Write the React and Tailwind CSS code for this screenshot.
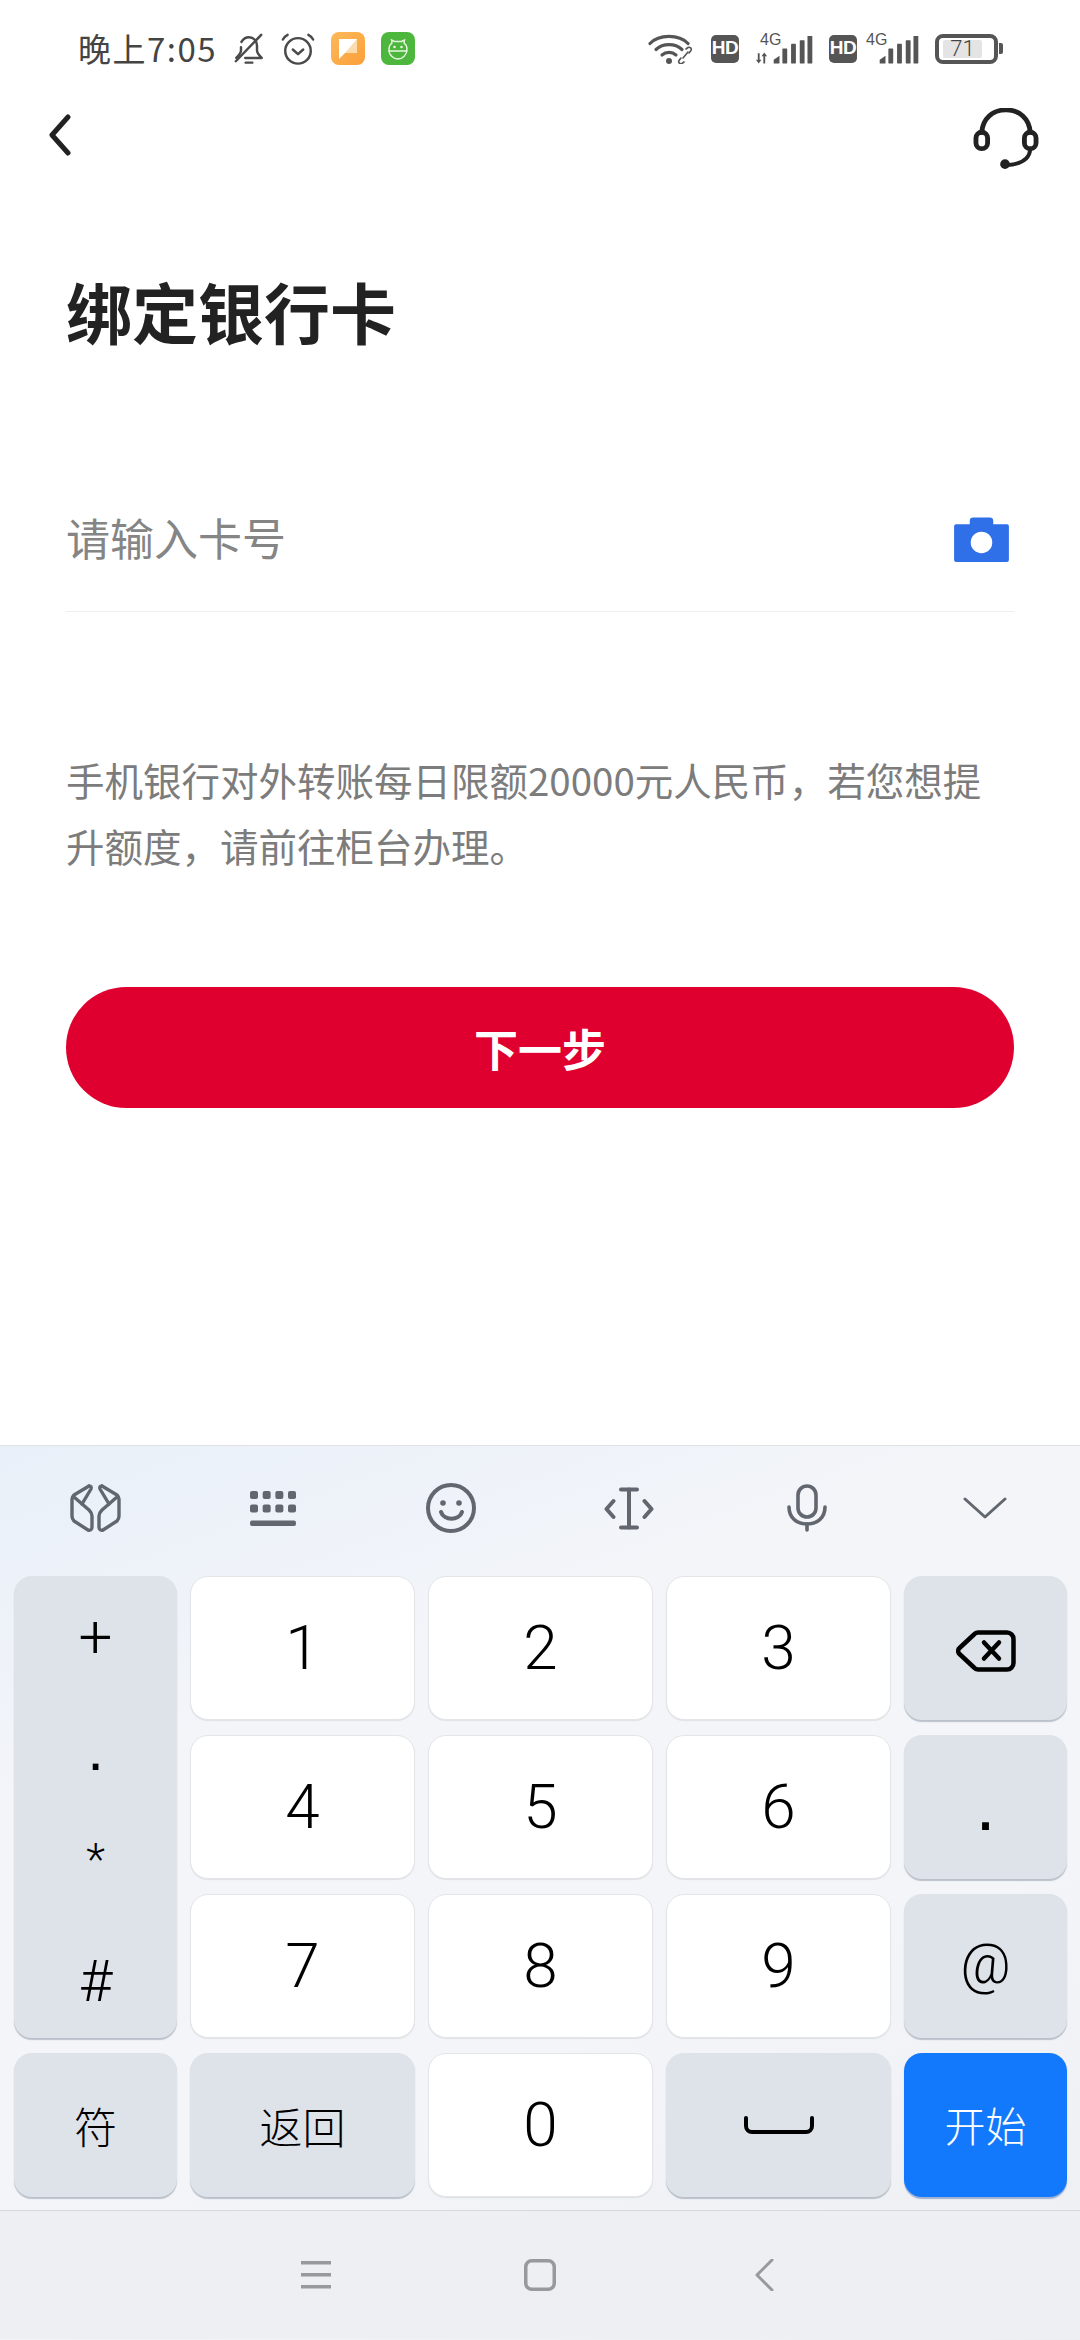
import React from 'react';

const cjk = '[font-family:"Noto_Sans_CJK_SC","Noto_Sans",sans-serif]';

const Bell = () => (
  <svg width="32" height="32" viewBox="0 0 32 34" fill="none" stroke="#4a4a4a" strokeWidth="2.6" strokeLinecap="round" strokeLinejoin="round">
    <path d="M8 9.500C10 6 12.500 4.500 16 4.500c5 0 8.500 4 8.500 9v5c0 3 2 5 5 8H12" />
    <path d="M7.500 15v3.500c0 3-2 5-5 8" />
    <path d="M2 30L29 2" />
    <path d="M12.500 31.500h7" />
  </svg>
);

const Alarm = () => (
  <svg width="36" height="34" viewBox="0 0 36 36" fill="none" stroke="#4a4a4a" strokeWidth="2.6" strokeLinecap="round" strokeLinejoin="round">
    <circle cx="18" cy="20" r="13.500" />
    <path d="M12.500 18.500l5.500 5 5.500-5" />
    <path d="M2 8c1-2 3-4 5-5" />
    <path d="M34 8c-1-2-3-4-5-5" />
  </svg>
);

const NoteApp = () => (
  <div className="w-[34px] h-[33px] rounded-[8px] bg-[linear-gradient(135deg,#fdb95a,#fb9f3a)] flex items-center justify-center">
    <svg width="20" height="22" viewBox="0 0 20 22">
      <path d="M1 1h18v14H7l-6 6z" fill="#fff" />
      <path d="M19 1v14H7z" fill="#fbdcae" />
    </svg>
  </div>
);

const RobotApp = () => (
  <div className="w-[34px] h-[33px] rounded-[8px] bg-[#4db63c] flex items-center justify-center">
    <svg width="24" height="24" viewBox="0 0 24 24" fill="none" stroke="#e8f6e0" strokeWidth="1.400" strokeLinecap="round">
      <path d="M6 6l-.5-3 3 1.500h7l3-1.500-.5 3c2 1.500 3 3.500 3 6 0 6-4.500 10-9 10S2.500 18 3 12c0-2.500 1-4.500 3-6z" />
      <path d="M3 14h18" />
      <circle cx="8.500" cy="10" r=".6" />
      <circle cx="15.500" cy="10" r=".6" />
    </svg>
  </div>
);

const Wifi = () => (
  <svg width="47" height="31" viewBox="0 0 47 31" fill="none" stroke="#555" strokeLinecap="round">
    <path d="M2 10.500C11 1 31 1 40 10.500" strokeWidth="3.200" />
    <path d="M8 16.500c7-6.500 19-6.500 26 0" strokeWidth="3.200" />
    <path d="M14 22c4-3.500 10-3.500 14 0" strokeWidth="3.200" />
    <circle cx="21" cy="28" r="3" fill="#555" stroke="none" />
    <path d="M36 29l-2 1.500c-2 1-4-1-3-3l2-2.500M38 16l2-1.500c2-1 4 1 3 3l-2 2.500" strokeWidth="1.600" />
    <path d="M35 25l5-6" strokeWidth="1.600" />
  </svg>
);

const Hd = () => (
  <div className="w-[28px] h-[28px] rounded-[5px] bg-[#555] flex items-center justify-center text-white text-[19px] font-bold font-['Liberation_Sans',sans-serif] tracking-[-0.5px]">HD</div>
);

const Bars = () => (
  <svg width="40" height="28" viewBox="0 0 40 29" fill="#555">
    <path d="M0 28.500v-4l6-4v8z" />
    <rect x="9" y="13" width="5" height="15.500" rx=".5" />
    <rect x="18" y="8" width="5" height="20.500" rx=".5" />
    <rect x="27" y="4.500" width="5" height="24" rx=".5" />
    <rect x="35" y="0" width="5" height="28.500" rx=".5" />
  </svg>
);

const Signal = ({ arrows }) => (
  <div className={`relative h-[30px] flex justify-end items-end ${arrows ? 'w-[58px]' : 'w-[53px]'}`}>
    <span className={`absolute top-[-3px] text-[16px] leading-[18px] text-[#555] font-['Liberation_Sans',sans-serif] ${arrows ? 'left-[5px]' : 'left-0'}`}>4G</span>
    {arrows && (
      <svg className="absolute left-0 bottom-0" width="13" height="12" viewBox="0 0 14 12" fill="#555">
        <path d="M3 1h2v7h2l-3 4-3-4h2zM9 12h2V4h2L10 0 7 4h2z" />
      </svg>
    )}
    <Bars />
  </div>
);

const Battery = () => (
  <div className="flex items-center">
    <div className="w-[63px] h-[30px] rounded-[8px] border-[4px] border-[#555] flex items-center pl-[4px]">
      <div className="relative w-[39px] h-[18px] bg-[#e4e4e4] rounded-[2px] text-[#444] text-[22px] leading-[18px] text-center font-['Roboto',sans-serif] font-light">71</div>
    </div>
    <div className="w-[4px] h-[11px] ml-[1px] rounded-r-[2px] bg-[#555]" />
  </div>
);

const StatusBar = () => (
  <div className="h-[97px] flex items-center pl-[78px] pr-[77px]">
    <span className={`w-[137px] whitespace-nowrap text-[33px] tracking-[1.5px] text-[#444] ${cjk} mr-[18px]`}>晚上7:05</span>
    <div className="flex items-center gap-[15px]">
      <Bell />
      <Alarm />
      <NoteApp />
      <div className="ml-[1px]"><RobotApp /></div>
    </div>
    <div className="flex-1" />
    <div className="flex items-center">
      <Wifi />
      <div className="ml-[16px]"><Hd /></div>
      <div className="ml-[16px]"><Signal arrows /></div>
      <div className="ml-[16px]"><Hd /></div>
      <div className="ml-[9px]"><Signal /></div>
      <div className="ml-[16px]"><Battery /></div>
    </div>
  </div>
);

const Headset = () => (
  <svg width="68" height="62" viewBox="0 0 68 64" fill="none" stroke="#222" strokeLinecap="round">
    <path d="M9 25C10 11 20 2 34 2s24 9 25 23" strokeWidth="5" />
    <rect x="3" y="25" width="12" height="17" rx="6" strokeWidth="5" />
    <rect x="53" y="25" width="12" height="17" rx="6" strokeWidth="5" />
    <path d="M59 43c-1 10-9 15-24 16" strokeWidth="4" />
    <circle cx="33" cy="58" r="5" fill="#222" stroke="none" />
  </svg>
);

const Camera = () => (
  <svg width="55" height="45" viewBox="0 0 56 46" fill="#2f6fe8">
    <path d="M2 7.500h14V4a3.500 3.500 0 0 1 3.500-3.500h17A3.500 3.500 0 0 1 40 4v3.500h14a2 2 0 0 1 2 2V44a2 2 0 0 1-2 2H2a2 2 0 0 1-2-2V9.500a2 2 0 0 1 2-2z" />
    <circle cx="28" cy="26" r="11" fill="#fff" />
  </svg>
);

const iconGray = '#62676f';
const toolStroke = { fill: 'none', stroke: iconGray, strokeLinecap: 'round', strokeLinejoin: 'round' };

const CubeLogo = () => (
  <svg width="53" height="50" viewBox="0 0 53 50" {...toolStroke} strokeWidth="3.400">
    <path d="M20 3L5 12Q3 14 3 16V33Q3 36 5 38L19 47Q23 48 23 44V33Q23 30 20 27L5 14" />
    <path d="M20 3Q23 3 22 6L13 21" />
    <path d="M33 3L48 12Q50 14 50 16V33Q50 36 48 38L34 47Q30 48 30 44V33Q30 30 33 27L48 14" />
    <path d="M33 3Q30 3 31 6L40 21" />
  </svg>
);

const KeyboardIcon = () => (
  <svg width="46" height="35" viewBox="0 0 46 35" fill={iconGray}>
    {[0, 1, 2, 3].map((i) => (
      <rect key={`a${i}`} x={i * 12.67} y="0" width="8" height="8" rx="2" />
    ))}
    {[0, 1, 2, 3].map((i) => (
      <rect key={`b${i}`} x={i * 12.67} y="13.500" width="8" height="8" rx="2" />
    ))}
    <rect x="0" y="29.500" width="46" height="5.500" rx="2" />
  </svg>
);

const Smile = () => (
  <svg width="50" height="50" viewBox="0 0 50 50" {...toolStroke} strokeWidth="4">
    <circle cx="25" cy="25" r="23" />
    <circle cx="17" cy="20" r="2.800" fill={iconGray} stroke="none" />
    <circle cx="33" cy="20" r="2.800" fill={iconGray} stroke="none" />
    <path d="M15 29c3 9 18 9 21 0" />
  </svg>
);

const CursorIcon = () => (
  <svg width="50" height="43" viewBox="0 0 50 43" {...toolStroke} strokeWidth="4">
    <path d="M17 2.500h16M17 40.500h16" />
    <path d="M25 2.500v38" />
    <path d="M9.500 14L2.500 22l7 8M40.500 14l7 8-7 8" />
  </svg>
);

const Mic = () => (
  <svg width="40" height="48" viewBox="0 0 40 48" {...toolStroke} strokeWidth="3.600">
    <rect x="11" y="2" width="18" height="31" rx="9" />
    <path d="M2 23c0 11 8 17 18 17s18-6 18-17" />
    <path d="M20 40v6" />
  </svg>
);

const ChevronDown = () => (
  <svg width="44" height="22" viewBox="0 0 44 22" {...toolStroke} strokeWidth="3">
    <path d="M2 2l20 18L42 2" />
  </svg>
);

const Backspace = () => (
  <svg className="mt-[6px]" width="60" height="42" viewBox="0 0 60 42" fill="none" stroke="#000" strokeWidth="4.500" strokeLinecap="round" strokeLinejoin="round">
    <path d="M22 2.500h29a6.500 6.500 0 0 1 6.500 6.500v24a6.500 6.500 0 0 1-6.500 6.500H22a6 6 0 0 1-4-2L3.500 24a4 4 0 0 1 0-6L18 4.500a6 6 0 0 1 4-2z" />
    <path d="M28 12.500l15 16M43 12.500l-15 16" />
  </svg>
);

const Key = ({ children, tone = 'white', className = '' }) => {
  const tones = {
    white: 'bg-white border border-[#e3e5e9] shadow-[0_1px_1px_rgba(0,0,0,0.08)]',
    gray: 'bg-[#dee2e9] shadow-[0_2px_1px_rgba(120,130,145,0.45)]',
    blue: 'bg-[#1279fc] shadow-[0_2px_1px_rgba(60,100,170,0.45)] text-white',
  };
  return (
    <div className={`flex items-center justify-center rounded-[18px] ${tones[tone]} ${className}`}>
      {children}
    </div>
  );
};

const digit = `text-[62px] leading-none text-black font-light font-['Roboto',sans-serif]`;
const keyCjk = `text-[43px] text-black font-light ${cjk}`;

const Keyboard = () => (
  <div className="flex-1 flex flex-col border-t border-[#dfe1e5] bg-[linear-gradient(160deg,#e9f0f9_0%,#f3f5f9_28%,#f3f5f9_62%,#eceef2_100%)]">
    <div className="h-[130px] px-[6px] pb-[6px] grid grid-cols-6 items-center justify-items-center">
      <CubeLogo />
      <KeyboardIcon />
      <Smile />
      <CursorIcon />
      <Mic />
      <ChevronDown />
    </div>
    <div className="pl-[14px] pr-[13px] grid grid-cols-[163px_225px_225px_225px_163px] grid-rows-[144px_144px_144px_144px] gap-x-[13px] gap-y-[15px]">
      <Key tone="gray" className="row-span-3 !flex-col !justify-start text-black font-['Roboto',sans-serif]">
        <div className="h-[60px] mt-[31px] text-[60px] leading-[60px] font-light">+</div>
        <div className="h-[60px] mt-[53px] text-[60px] leading-[60px] font-['Liberation_Sans',sans-serif]">.</div>
        <div className="h-[60px] mt-[50px] text-[44px] leading-[60px] font-light">*</div>
        <div className="h-[60px] mt-[61px] text-[58px] leading-[60px] font-light">#</div>
      </Key>
      <Key><span className={digit}>1</span></Key>
      <Key><span className={digit}>2</span></Key>
      <Key><span className={digit}>3</span></Key>
      <Key tone="gray"><Backspace /></Key>
      <Key><span className={digit}>4</span></Key>
      <Key><span className={digit}>5</span></Key>
      <Key><span className={digit}>6</span></Key>
      <Key tone="gray"><span className="text-[72px] leading-none text-black font-['Liberation_Sans',sans-serif] mb-[4px]">.</span></Key>
      <Key><span className={digit}>7</span></Key>
      <Key><span className={digit}>8</span></Key>
      <Key><span className={digit}>9</span></Key>
      <Key tone="gray"><span className="text-[55px] leading-none font-light text-black font-['Roboto',sans-serif] mb-[4px]">@</span></Key>
      <Key tone="gray"><span className={keyCjk}>符</span></Key>
      <Key tone="gray"><span className={keyCjk}>返回</span></Key>
      <Key><span className={digit}>0</span></Key>
      <Key tone="gray">
        <svg width="70" height="18" viewBox="0 0 70 18" fill="none" stroke="#000" strokeWidth="4" strokeLinecap="round" strokeLinejoin="round">
          <path d="M2 2v8a6 6 0 0 0 6 6h54a6 6 0 0 0 6-6V2" />
        </svg>
      </Key>
      <Key tone="blue"><span className={`text-[41px] font-light ${cjk}`}>开始</span></Key>
    </div>
    <div className="mt-[13px] border-t border-[#d6d8dc] bg-[#edeff3] h-[129px] flex items-center justify-center">
      <div className="grid grid-cols-3 w-[672px] justify-items-center items-center">
        <svg width="32" height="30" viewBox="0 0 32 30" fill="#98999c">
          <rect x="1" y="1" width="30" height="3.500" />
          <rect x="1" y="13" width="30" height="3.500" />
          <rect x="1" y="25" width="30" height="3.500" />
        </svg>
        <svg width="32" height="32" viewBox="0 0 32 32" fill="none" stroke="#98999c" strokeWidth="3.500">
          <rect x="1.750" y="1.750" width="28.500" height="28.500" rx="6" />
        </svg>
        <svg width="20" height="32" viewBox="0 0 20 32" fill="none" stroke="#98999c" strokeWidth="3" strokeLinecap="round" strokeLinejoin="round">
          <path d="M18 1L3 16l15 15" />
        </svg>
      </div>
    </div>
  </div>
);

export default function App() {
  return (
    <div className={`w-[1080px] h-[2340px] flex flex-col bg-white overflow-hidden ${cjk}`}>
      <StatusBar />
      <div className="h-[83px] pl-[49px] pr-[40px] flex items-center justify-between">
        <svg className="mb-[7px]" width="22" height="42" viewBox="0 0 22 42" fill="none" stroke="#222" strokeWidth="5" strokeLinecap="round" strokeLinejoin="round">
          <path d="M19 3L3 21l16 18" />
        </svg>
        <Headset />
      </div>
      <div className="h-[1265px] px-[66px]">
        <h1 className="mt-[84px] h-[92px] text-[66px] leading-[92px] font-bold text-[#222]">绑定银行卡</h1>
        <div className="mt-[112px] h-[144px] border-b border-[#eeeeee] flex items-center justify-between pr-[5px]">
          <span className="text-[44px] text-[#858585] mb-[5px]">请输入卡号</span>
          <Camera />
        </div>
        <p className="mt-[134px] text-[38.500px] leading-[66px] text-[#7c7c7c]">
          手机银行对外转账每日限额20000元人民币，若您想提升额度，请前往柜台办理。
        </p>
        <button className="block w-full mt-[109px] h-[121px] rounded-full bg-[#df0030] text-white text-[44px] font-bold">
          下一步
        </button>
      </div>
      <Keyboard />
    </div>
  );
}
